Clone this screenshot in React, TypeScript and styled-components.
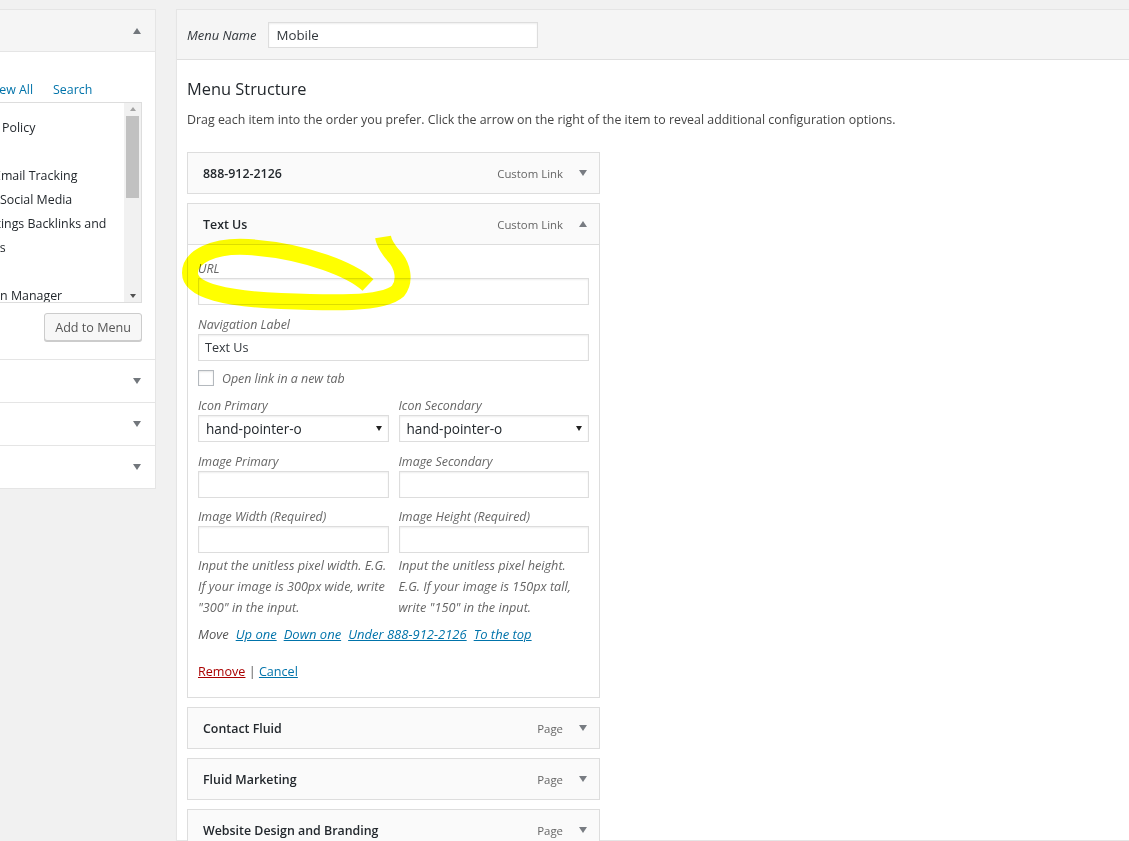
import React from 'react';
import styled, { createGlobalStyle } from 'styled-components';

const GlobalStyle = createGlobalStyle`
  html, body {
    margin: 0;
    padding: 0;
    background: #f1f1f1;
    overflow: hidden;
  }

  body {
    font-family: 'Open Sans', 'Noto Sans', sans-serif;
    font-size: 12.4px;
    color: #23282d;
  }

  * {
    box-sizing: border-box;
  }
`;

const Page = styled.div`
  display: flex;
  align-items: flex-start;
  gap: 20px;
  padding-top: 9px;
  height: 841px;
`;

/* ---------- shared bits ---------- */

const Triangle = styled.span<{ $up?: boolean; $color?: string; $w?: number; $h?: number }>`
  display: inline-block;
  width: 0;
  height: 0;
  flex-shrink: 0;
  border-left: ${({ $w = 9 }) => $w / 2}px solid transparent;
  border-right: ${({ $w = 9 }) => $w / 2}px solid transparent;
  ${({ $up, $color = '#72777c', $h = 6 }) => $up
    ? `border-bottom: ${$h}px solid ${$color};`
    : `border-top: ${$h}px solid ${$color};`}
`;

/* ---------- left column (add items) ---------- */

const LeftColumn = styled.div`
  width: 156px;
  flex-shrink: 0;
  display: flex;
  justify-content: flex-end;
  overflow: hidden;
`;

const LeftPanel = styled.div`
  width: 281px;
  flex-shrink: 0;
  background: #fff;
  border: 1px solid #e5e5e5;
  box-shadow: 0 1px 1px rgba(0, 0, 0, 0.04);
`;

const SectionHeader = styled.div<{ $open?: boolean }>`
  height: ${({ $open }) => ($open ? 42 : 43)}px;
  display: flex;
  align-items: center;
  justify-content: space-between;
  padding: 0 14px 0 13px;
  background: ${({ $open }) => ($open ? '#f5f5f5' : '#fff')};
  border-bottom: ${({ $open }) => ($open ? '1px solid #e5e5e5' : 'none')};
  border-top: ${({ $open }) => ($open ? 'none' : '1px solid #e5e5e5')};
  font-size: 13.5px;
  font-weight: 600;
  color: #23282d;
`;

const SectionBody = styled.div`
  padding: 29px 13px 18px 13px;
`;

const Tabs = styled.div`
  display: flex;
  gap: 20px;
  padding-left: 8px;
  line-height: 18px;
  margin-bottom: 3px;
`;

const Tab = styled.span<{ $active?: boolean }>`
  color: ${({ $active }) => ($active ? '#23282d' : '#0073aa')};
  white-space: nowrap;
`;

const ListBox = styled.div`
  height: 201px;
  border: 1px solid #ddd;
  background: #fff;
  display: flex;
  overflow: hidden;
`;

const ListRows = styled.div`
  flex: 1;
  min-width: 0;
  padding-top: 13px;
  overflow: hidden;
`;

const ListRow = styled.div<{ $indent: number }>`
  height: 24px;
  line-height: 24px;
  padding-left: ${({ $indent }) => $indent}px;
  white-space: nowrap;
  color: #23282d;
`;

const ScrollTrack = styled.div`
  width: 17px;
  flex-shrink: 0;
  background: #f1f1f1;
  display: flex;
  flex-direction: column;
  align-items: center;
  padding: 4px 0;
`;

const ScrollThumb = styled.div`
  width: 13px;
  height: 82px;
  background: #c1c1c1;
  margin: 5px 0 auto;
`;

const ButtonRow = styled.div`
  display: flex;
  justify-content: flex-end;
  margin-top: 10px;
`;

const Button = styled.button`
  height: 28px;
  padding: 0 10px;
  background: #f7f7f7;
  border: 1px solid #ccc;
  border-radius: 3px;
  box-shadow: 0 1px 0 #ccc;
  color: #555;
  font-family: inherit;
  font-size: 12.6px;
  white-space: nowrap;
`;

/* ---------- right column (menu structure) ---------- */

const RightPanel = styled.div`
  flex: 1;
  min-width: 0;
  height: 100%;
  background: #fff;
  border: 1px solid #e5e5e5;
  border-right: none;
  box-shadow: 0 1px 1px rgba(0, 0, 0, 0.04);
`;

const MenuHeader = styled.div`
  height: 50px;
  display: flex;
  align-items: center;
  gap: 12px;
  padding: 0 10px;
  background: #f5f5f5;
  border-bottom: 1px solid #dfdfdf;
`;

const NameLabel = styled.label`
  font-style: italic;
  font-size: 12.9px;
  color: #32373c;
`;

const NameInput = styled.div`
  width: 270px;
  height: 26px;
  display: flex;
  align-items: center;
  padding: 0 7px;
  background: #fff;
  border: 1px solid #ddd;
  box-shadow: inset 0 1px 2px rgba(0, 0, 0, 0.07);
  font-size: 13.3px;
  color: #32373c;
`;

const MenuBody = styled.div`
  padding: 17px 10px 0;
`;

const Heading = styled.h3`
  margin: 0;
  font-size: 16.4px;
  font-weight: 400;
  line-height: 24px;
  color: #23282d;
`;

const Intro = styled.p`
  margin: 9px 0 0;
  line-height: 20px;
  color: #444;
`;

const ItemList = styled.div`
  width: 413px;
  display: flex;
  flex-direction: column;
  gap: 9px;
  margin-top: 22px;
`;

const Handle = styled.div`
  height: 42px;
  display: flex;
  align-items: center;
  padding: 0 12px 0 15px;
  background: #fafafa;
  border: 1px solid #ddd;
`;

const ItemTitle = styled.span`
  flex: 1;
  font-weight: 600;
  color: #23282d;
`;

const ItemType = styled.span`
  font-size: 11.4px;
  color: #666;
  margin-right: 16px;
`;

const Settings = styled.div`
  position: relative;
  padding: 15px 10px 15px;
  background: #fff;
  border: 1px solid #ddd;
  border-top: none;
`;

const Field = styled.div<{ $mt?: number }>`
  display: flex;
  flex-direction: column;
  margin-top: ${({ $mt = 0 }) => $mt}px;
`;

const FieldRow = styled.div<{ $mt?: number }>`
  display: grid;
  grid-template-columns: 1fr 1fr;
  column-gap: 10px;
  margin-top: ${({ $mt = 0 }) => $mt}px;
`;

const FieldLabel = styled.label`
  font-style: italic;
  color: #666;
  line-height: 18px;
`;

const TextInput = styled.div`
  height: 27px;
  display: flex;
  align-items: center;
  padding: 0 6px;
  background: #fff;
  border: 1px solid #ddd;
  box-shadow: inset 0 1px 2px rgba(0, 0, 0, 0.07);
  color: #32373c;
  font-size: 12.6px;
`;

const Select = styled(TextInput)`
  justify-content: space-between;
  padding: 0 6px 0 7px;
  font-size: 13.6px;
  color: #23282d;
`;

const CheckRow = styled.label`
  display: flex;
  align-items: center;
  gap: 8px;
  margin-top: 9px;
  height: 16px;
  font-style: italic;
  color: #666;
`;

const CheckBox = styled.span`
  width: 16px;
  height: 16px;
  border: 1px solid #b4b9be;
  background: #fff;
  box-shadow: inset 0 1px 2px rgba(0, 0, 0, 0.1);
`;

const Help = styled.p`
  margin: 2px 0 0;
  padding-right: 1px;
  font-size: 12.7px;
  font-style: italic;
  color: #666;
  line-height: 21px;
`;

const MoveRow = styled.div`
  display: flex;
  gap: 7px;
  margin-top: 6px;
  line-height: 20px;
  font-size: 13px;
  font-style: italic;
  color: #555;
  white-space: nowrap;
`;

const TextLink = styled.a<{ $danger?: boolean }>`
  color: ${({ $danger }) => ($danger ? '#a00' : '#0073aa')};
  text-decoration: underline;
  cursor: pointer;
`;

const ActionRow = styled.div`
  margin-top: 18px;
  line-height: 20px;
  font-size: 12.6px;
  color: #555;
`;

const Scribble = styled.svg`
  position: absolute;
  left: 0;
  top: -10px;
  width: 230px;
  height: 80px;
  overflow: visible;
  pointer-events: none;
  mix-blend-mode: multiply;
`;

const listRows = [
  { label: 'Privacy Policy', indent: 68 },
  { label: 'Home', indent: 51 },
  { label: 'Email Tracking', indent: 104 },
  { label: 'Social Media', indent: 110 },
  { label: 'Listings Backlinks and', indent: 91 },
  { label: 'Citations', indent: 65 },
  { label: 'Blog', indent: 51 },
  { label: 'Reputation Manager', indent: 54 }
];

const closedItems = [
  { title: 'Contact Fluid', type: 'Page' },
  { title: 'Fluid Marketing', type: 'Page' },
  { title: 'Website Design and Branding', type: 'Page' }
];

function ItemHandle ({ title, type, open }: { title: string; type: string; open?: boolean }) {
  return (
    <Handle>
      <ItemTitle>{title}</ItemTitle>
      <ItemType>{type}</ItemType>
      <Triangle $up={open} $color='#787c82' $w={9} $h={6} />
    </Handle>
  );
}

export default function App () {
  return (
    <>
      <GlobalStyle />
      <Page>
        <LeftColumn>
          <LeftPanel>
            <SectionHeader $open>
              <span>Pages</span>
              <Triangle $up $w={9} $h={6} />
            </SectionHeader>
            <SectionBody>
              <Tabs>
                <Tab $active>Most Recent</Tab>
                <Tab>View All</Tab>
                <Tab>Search</Tab>
              </Tabs>
              <ListBox>
                <ListRows>
                  {listRows.map((row) => (
                    <ListRow key={row.label} $indent={row.indent}>{row.label}</ListRow>
                  ))}
                </ListRows>
                <ScrollTrack>
                  <Triangle $up $color='#a3a3a3' $w={7} $h={4} />
                  <ScrollThumb />
                  <Triangle $color='#505050' $w={7} $h={4} />
                </ScrollTrack>
              </ListBox>
              <ButtonRow>
                <Button>Add to Menu</Button>
              </ButtonRow>
            </SectionBody>
            {['Posts', 'Custom Links', 'Categories'].map((title) => (
              <SectionHeader key={title}>
                <span>{title}</span>
                <Triangle $w={9} $h={6} />
              </SectionHeader>
            ))}
          </LeftPanel>
        </LeftColumn>

        <RightPanel>
          <MenuHeader>
            <NameLabel>Menu Name</NameLabel>
            <NameInput>Mobile</NameInput>
          </MenuHeader>
          <MenuBody>
            <Heading>Menu Structure</Heading>
            <Intro>Drag each item into the order you prefer. Click the arrow on the right of the item to reveal additional configuration options.</Intro>

            <ItemList>
              <ItemHandle title='888-912-2126' type='Custom Link' />

              <div>
                <ItemHandle title='Text Us' type='Custom Link' open />
                <Settings>
                  <Field>
                    <FieldLabel>URL</FieldLabel>
                    <TextInput />
                  </Field>
                  <Field $mt={11}>
                    <FieldLabel>Navigation Label</FieldLabel>
                    <TextInput>Text Us</TextInput>
                  </Field>
                  <CheckRow>
                    <CheckBox />
                    Open link in a new tab
                  </CheckRow>
                  <FieldRow $mt={11}>
                    <Field>
                      <FieldLabel>Icon Primary</FieldLabel>
                      <Select>hand-pointer-o<Triangle $color='#222' $w={7} $h={5} /></Select>
                    </Field>
                    <Field>
                      <FieldLabel>Icon Secondary</FieldLabel>
                      <Select>hand-pointer-o<Triangle $color='#222' $w={7} $h={5} /></Select>
                    </Field>
                  </FieldRow>
                  <FieldRow $mt={11}>
                    <Field>
                      <FieldLabel>Image Primary</FieldLabel>
                      <TextInput />
                    </Field>
                    <Field>
                      <FieldLabel>Image Secondary</FieldLabel>
                      <TextInput />
                    </Field>
                  </FieldRow>
                  <FieldRow $mt={10}>
                    <Field>
                      <FieldLabel>Image Width (Required)</FieldLabel>
                      <TextInput />
                      <Help>Input the unitless pixel width. E.G. If your image is 300px wide, write "300" in the input.</Help>
                    </Field>
                    <Field>
                      <FieldLabel>Image Height (Required)</FieldLabel>
                      <TextInput />
                      <Help>Input the unitless pixel height. E.G. If your image is 150px tall, write "150" in the input.</Help>
                    </Field>
                  </FieldRow>
                  <MoveRow>
                    <span>Move</span>
                    <TextLink>Up one</TextLink>
                    <TextLink>Down one</TextLink>
                    <TextLink>Under 888-912-2126</TextLink>
                    <TextLink>To the top</TextLink>
                  </MoveRow>
                  <ActionRow>
                    <TextLink $danger>Remove</TextLink> | <TextLink>Cancel</TextLink>
                  </ActionRow>

                  <Scribble viewBox='0 0 230 80'>
                    <path
                      d='M 180 50 C 165 36, 120 16, 60 12 C 25 10, 2 22, 2 38 C 2 56, 40 64, 93 66 C 140 68, 195 70, 210 56 C 218 46, 215 30, 205 20 C 200 14, 196 8, 195 2'
                      fill='none'
                      stroke='#ffff00'
                      strokeWidth={16}
                      strokeLinecap='butt'
                    />
                  </Scribble>
                </Settings>
              </div>

              {closedItems.map((item) => (
                <ItemHandle key={item.title} title={item.title} type={item.type} />
              ))}
            </ItemList>
          </MenuBody>
        </RightPanel>
      </Page>
    </>
  );
}
